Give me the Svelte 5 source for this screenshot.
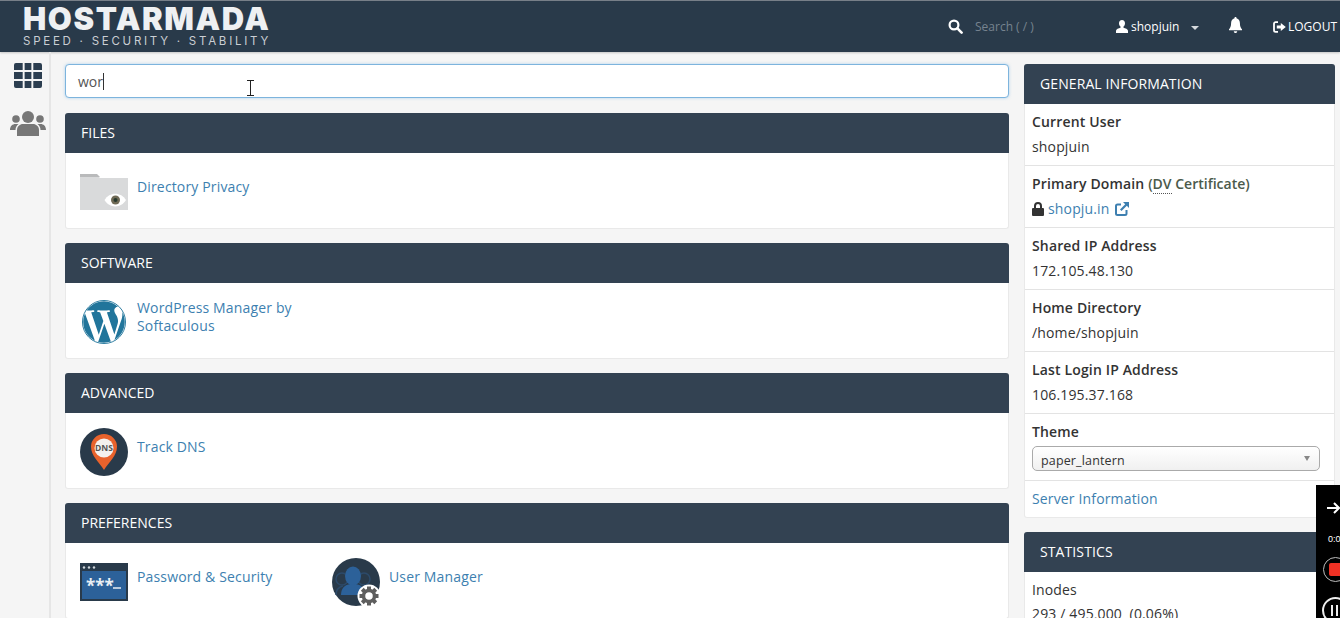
<script lang="ts">
	const groups = [
		{ title: 'FILES', items: [{ name: 'Directory Privacy', icon: 'folder' }] },
		{ title: 'SOFTWARE', items: [{ name: 'WordPress Manager by Softaculous', icon: 'wp', tall: true }] },
		{ title: 'ADVANCED', items: [{ name: 'Track DNS', icon: 'dns' }] },
		{
			title: 'PREFERENCES',
			items: [
				{ name: 'Password & Security', icon: 'pass' },
				{ name: 'User Manager', icon: 'user' }
			]
		}
	];
	const gearTeeth = [0, 45, 90, 135, 180, 225, 270, 315];
</script>

<div class="page">
	<header class="topbar">
		<div class="logo">
			<div class="logo-name">HOSTARMADA</div>
			<div class="logo-tag">SPEED · SECURITY · STABILITY</div>
		</div>
		<div class="top-search">
			<svg class="top-icon" width="15" height="15" viewBox="0 0 15 15">
				<circle cx="6" cy="6" r="4.4" fill="none" stroke="#fff" stroke-width="2.2" />
				<path d="M9.4 9.4 13.6 13.6" stroke="#fff" stroke-width="2.6" stroke-linecap="round" />
			</svg>
			<span class="search-hint">Search ( / )</span>
		</div>
		<div class="top-user">
			<svg width="12" height="13" viewBox="0 0 12 13">
				<path d="M6 0c1.9 0 3 1.400 3 3.300 0 1.400-.6 2.600-1.500 3.300v1.100c1.800.6 4.500 1.300 4.500 3v2.300H0v-2.300c0-1.700 2.700-2.400 4.500-3V6.600C3.600 5.900 3 4.700 3 3.300 3 1.400 4.100 0 6 0z" fill="#fff" />
			</svg>
			<span>shopjuin</span>
			<i class="caret"></i>
		</div>
		<svg class="bell" width="15" height="16" viewBox="0 0 15 15" preserveAspectRatio="none">
			<path d="M7.500 0c.7 0 1.100.5 1 1.200 2.200.5 3.400 2.300 3.400 4.500 0 3 .8 4.600 2.100 5.800v1H1v-1c1.300-1.200 2.100-2.800 2.100-5.800 0-2.200 1.200-4 3.400-4.500-.1-.7.3-1.200 1-1.200zM5.800 13.300h3.400c0 1-.8 1.700-1.700 1.700s-1.700-.7-1.700-1.700z" fill="#fff" />
		</svg>
		<div class="top-logout">
			<svg width="13" height="12" viewBox="0 0 13 12">
				<path d="M5 1.200H2.600C1.700 1.200 1 1.900 1 2.800v6.400c0 .9.700 1.600 1.600 1.600H5" fill="none" stroke="#fff" stroke-width="1.800" />
				<path d="M3.800 4.500h4V2l5 4-5 4V7.500h-4z" fill="#fff" />
			</svg>
			<span>LOGOUT</span>
		</div>
	</header>

	<div class="main">
		<aside class="rail">
			<svg class="rail-grid" width="28" height="25" viewBox="0 0 29 25" preserveAspectRatio="none">
				<path d="M2 0h7v7H0V2a2 2 0 0 1 2-2zM11 0h7v7h-7zM20 0h7a2 2 0 0 1 2 2v5h-9zM0 9h9v7H0zM11 9h7v7h-7zM20 9h9v7h-9zM0 18h9v7H2a2 2 0 0 1-2-2zM11 18h7v7h-7zM20 18h9v5a2 2 0 0 1-2 2h-7z" fill="#2c3e50" />
			</svg>
			<svg class="rail-users" width="36" height="26" viewBox="0 0 36 26">
				<g fill="#777">
					<circle cx="18" cy="6" r="6" />
					<circle cx="6" cy="8" r="3.800" />
					<circle cx="30" cy="8" r="3.800" />
					<path d="M7 25v-6c0-3.500 3-6 6-6h10c3 0 6 2.500 6 6v6z" />
					<path d="M0 19c0-4 2.500-6 5.500-6h3C6.500 14.500 5.500 16.500 5.500 19H0zM36 19c0-4-2.500-6-5.500-6h-3c2 1.500 3 3.500 3 6H36z" />
				</g>
			</svg>
		</aside>

		<section class="content">
			<div class="filter">
				<span>wor</span><i class="text-caret"></i>
				<svg class="ibeam" width="7" height="16" viewBox="0 0 7 16">
					<path d="M0 .5h7M0 15.500h7M3.500.5v15" stroke="#222" stroke-width="1" fill="none" />
				</svg>
			</div>

			{#each groups as group}
				<div class="panel">
					<h2 class="panel-head">{group.title}</h2>
					<div class="panel-body">
						{#each group.items as item}
							<div class="item">
								<div class="item-icon">
									{#if item.icon === 'folder'}
										<svg width="48" height="36" viewBox="0 0 48 36">
											<path d="M0 1h17l3 3h28v32H0z" fill="#d9dadb" />
											<path d="M0 0h17l3 3H0z" fill="#b9babb" />
											<path d="M24.500 26c5-8.500 16.500-8.500 21.500 0-5 8.500-16.500 8.500-21.500 0z" fill="#fff" />
											<circle cx="35.500" cy="26" r="4.500" fill="#6f6a55" />
											<circle cx="35.500" cy="26" r="2" fill="#26382c" />
										</svg>
									{:else if item.icon === 'wp'}
										<svg width="44" height="44" viewBox="0 0 24 24">
											<circle cx="12" cy="12" r="11.750" fill="#fff" stroke="#21759b" stroke-width="0.5" />
											<path transform="translate(12 12) scale(1.05) translate(-12 -12)" d="M21.469 6.825c.84 1.537 1.318 3.3 1.318 5.175 0 3.979-2.156 7.456-5.363 9.325l3.295-9.527c.615-1.54.82-2.771.82-3.864 0-.405-.026-.78-.07-1.11m-7.981.105c.647-.03 1.232-.105 1.232-.105.582-.075.514-.93-.067-.899 0 0-1.755.135-2.88.135-1.064 0-2.85-.15-2.85-.15-.585-.03-.661.855-.075.885 0 0 .54.061 1.125.09l1.68 4.605-2.37 7.08L5.354 6.9c.649-.03 1.234-.1 1.234-.1.585-.075.516-.93-.065-.896 0 0-1.746.138-2.874.138-.2 0-.438-.008-.69-.015C4.911 3.15 8.235 1.215 12 1.215c2.809 0 5.365 1.072 7.286 2.833-.046-.003-.091-.009-.141-.009-1.06 0-1.812.923-1.812 1.914 0 .89.513 1.643 1.06 2.531.411.72.89 1.643.89 2.977 0 .915-.354 1.994-.821 3.479l-1.075 3.585-3.9-11.61.001.014zM12 22.784c-1.059 0-2.081-.153-3.048-.437l3.237-9.406 3.315 9.087c.024.053.05.101.078.149-1.12.393-2.325.609-3.582.609M1.211 12c0-1.564.336-3.05.935-4.39L7.29 21.709C3.694 19.96 1.212 16.271 1.211 12" fill="#21759b" />
										</svg>
									{:else if item.icon === 'dns'}
										<svg width="48" height="48" viewBox="0 0 48 48">
											<circle cx="24" cy="24" r="24" fill="#293a4a" />
											<path d="M24 42C19 34 11 28 11 18.500a13 12.500 0 0 1 26 0C37 28 29 34 24 42z" fill="#e8622c" />
											<circle cx="24" cy="20" r="9.500" fill="#f4f1ee" />
											<text x="24" y="23" class="dns-text">DNS</text>
										</svg>
									{:else if item.icon === 'pass'}
										<svg width="48" height="38" viewBox="0 0 48 38">
											<rect width="48" height="38" fill="#293a4a" />
											<rect x="2" y="8" width="44" height="28" fill="#2c6199" />
											<circle cx="4" cy="4.500" r="1.200" fill="#cfd6dc" />
											<circle cx="9" cy="4.500" r="1.200" fill="#cfd6dc" />
											<circle cx="14" cy="4.500" r="1.200" fill="#cfd6dc" />
											<text x="6" y="29" class="pass-text">***</text>
											<path d="M33 25h8" stroke="#e8eef4" stroke-width="1.500" />
										</svg>
									{:else}
										<svg class="user-svg" width="48" height="48" viewBox="0 0 48 48">
											<circle cx="24" cy="24" r="24" fill="#293a4a" />
											<circle cx="10" cy="21" r="6" fill="none" stroke="#2c4a6a" stroke-width="1.500" />
											<circle cx="32" cy="21" r="6" fill="none" stroke="#2c4a6a" stroke-width="1.500" />
											<path d="M4 37c0-6 3-8 7-9M38 37c0-6-3-8-7-9" fill="none" stroke="#2c4a6a" stroke-width="1.500" />
											<ellipse cx="21" cy="18" rx="8" ry="9.500" fill="#2c6199" />
											<path d="M9 37c0-8 5-11 12-11s12 3 12 11z" fill="#2c6199" />
											<circle cx="37" cy="38" r="11.500" fill="#fff" />
											<g fill="#5e5e5e">
												{#each gearTeeth as a}
													<rect x="35" y="28.500" width="4" height="5" transform="rotate({a} 37 38)" />
												{/each}
											</g>
											<circle cx="37" cy="38" r="5.500" fill="none" stroke="#5e5e5e" stroke-width="3.500" />
										</svg>
									{/if}
								</div>
								<a class="item-link" class:tall={item.tall} href="#top">{item.name}</a>
							</div>
						{/each}
					</div>
				</div>
			{/each}
		</section>

		<aside class="side">
			<div class="panel side-panel">
				<h2 class="panel-head">GENERAL INFORMATION</h2>
				<div class="side-body">
					<div class="row">
						<div class="label">Current User</div>
						<div class="value">shopjuin</div>
					</div>
					<div class="row">
						<div class="label">Primary Domain <span class="note">(<abbr>DV</abbr> Certificate)</span></div>
						<div class="value">
							<svg class="lock" width="12" height="14" viewBox="0 0 12 14">
								<path d="M2 6V4a4 4 0 0 1 8 0v2h1a1 1 0 0 1 1 1v6a1 1 0 0 1-1 1H1a1 1 0 0 1-1-1V7a1 1 0 0 1 1-1zM4 6h4V4a2 2 0 0 0-4 0z" fill="#333" />
							</svg>
							<a href="#top">shopju.in</a>
							<svg class="ext" width="14" height="14" viewBox="0 0 14 14">
								<path d="M6 2.500H2.500A1.500 1.500 0 0 0 1 4v7.500A1.500 1.500 0 0 0 2.500 13H10a1.500 1.500 0 0 0 1.500-1.500V8" fill="none" stroke="#3d7fb0" stroke-width="2" />
								<path d="M8 0h6v6l-2.200-2.200L6.500 9 5 7.500l5.200-5.300z" fill="#3d7fb0" />
							</svg>
						</div>
					</div>
					<div class="row">
						<div class="label">Shared IP Address</div>
						<div class="value">172.105.48.130</div>
					</div>
					<div class="row">
						<div class="label">Home Directory</div>
						<div class="value">/home/shopjuin</div>
					</div>
					<div class="row">
						<div class="label">Last Login IP Address</div>
						<div class="value">106.195.37.168</div>
					</div>
					<div class="row theme-row">
						<div class="label">Theme</div>
						<div class="theme-select">paper_lantern<i class="select-arrow"></i></div>
					</div>
					<div class="row server-row"><a href="#top">Server Information</a></div>
				</div>
			</div>

			<div class="panel side-panel">
				<h2 class="panel-head">STATISTICS</h2>
				<div class="side-body">
					<div class="row">
						<div class="stat-label">Inodes</div>
						<div class="value">293 / 495,000 &nbsp;(0.06%)</div>
					</div>
				</div>
			</div>
		</aside>
	</div>

	<div class="recorder">
		<svg class="rec-arrow" width="14" height="12" viewBox="0 0 14 12">
			<path d="M0 6h12M7 1l5 5-5 5" fill="none" stroke="#fff" stroke-width="2" />
		</svg>
		<span class="rec-time">0:00</span>
		<div class="rec-ring"><i class="rec-stop"></i></div>
		<div class="rec-pause"><i></i><i></i></div>
	</div>
</div>

<style>
	:global(body) {
		margin: 0;
		background: #f4f4f4;
		font-family: 'Open Sans', sans-serif;
	}

	.page {
		position: relative;
		width: 1340px;
		height: 618px;
		overflow: hidden;
		background: #f5f5f5;
		color: #333;
		font-size: 14px;
	}

	.topbar {
		height: 51px;
		border-top: 1px solid #777f88;
		background: #293a4a;
		display: flex;
		align-items: center;
		color: #fff;
		box-shadow: 0 1px 2px rgba(0, 0, 0, 0.2);
	}

	.logo {
		margin-left: 23px;
		width: 250px;
		margin-top: -1px;
	}

	.logo-name {
		font-family: Inter, sans-serif;
		font-weight: 900;
		font-size: 31px;
		line-height: 30px;
		letter-spacing: 1.600px;
		color: #eef0f2;
		white-space: nowrap;
	}

	.logo-tag {
		font-family: Inter, sans-serif;
		font-size: 11.500px;
		line-height: 14px;
		letter-spacing: 2.750px;
		color: #c9ced3;
		white-space: nowrap;
	}

	.top-search {
		margin-left: 675px;
		width: 168px;
		display: flex;
		align-items: center;
		gap: 12px;
	}

	.search-hint {
		font-size: 12px;
		color: #76838f;
	}

	.top-user {
		width: 112px;
		display: flex;
		align-items: center;
		gap: 3px;
		font-size: 12px;
	}

	.caret {
		margin-left: 9px;
		margin-top: 2px;
		border: 4px solid transparent;
		border-top-color: #d5d9dd;
		border-bottom: 0;
	}

	.bell {
		margin-right: 30px;
		margin-bottom: 3px;
	}

	.top-logout {
		display: flex;
		align-items: center;
		gap: 2px;
		font-size: 12px;
		white-space: nowrap;
	}

	.main {
		display: flex;
		align-items: flex-start;
	}

	.rail {
		box-sizing: border-box;
		width: 51px;
		height: 566px;
		flex: none;
		border-right: 2px solid #e6e6e6;
		display: flex;
		flex-direction: column;
		align-items: center;
		padding: 11px 0 0 7px;
	}

	.rail-users {
		margin-top: 23px;
	}

	.content {
		width: 944px;
		margin-left: 14px;
		padding-top: 12px;
		flex: none;
	}

	.filter {
		position: relative;
		box-sizing: border-box;
		height: 34px;
		margin-bottom: 15px;
		padding-left: 12px;
		background: #fff;
		border: 1px solid #7db4dd;
		border-radius: 4px;
		box-shadow: 0 0 3px rgba(102, 175, 233, 0.5);
		display: flex;
		align-items: center;
		color: #555;
	}

	.text-caret {
		width: 1px;
		height: 17px;
		background: #333;
	}

	.ibeam {
		position: absolute;
		left: 181px;
		top: 15px;
	}

	.panel {
		margin-bottom: 14px;
		background: #fff;
		border: 1px solid #e9e9e9;
		border-top: 0;
		border-radius: 3px;
	}

	.panel-head {
		margin: 0 -1px;
		height: 40px;
		padding-left: 16px;
		background: #334252;
		border-radius: 3px 3px 0 0;
		color: #fff;
		font-size: 14px;
		font-weight: 400;
		line-height: 40px;
	}

	.panel-body {
		height: 75px;
		display: flex;
		padding: 0 14px;
	}

	.item {
		width: 252px;
		display: flex;
		align-items: flex-start;
		padding-top: 15px;
	}

	.item-icon {
		width: 48px;
		height: 48px;
		flex: none;
		margin-right: 9px;
		display: flex;
		align-items: center;
		justify-content: center;
	}

	.item-icon svg {
		flex: none;
		overflow: visible;
		margin-top: -1px;
	}

	.item-icon .user-svg {
		margin-top: 0;
	}

	.item-link {
		width: 190px;
		margin-top: 10px;
		color: #3d7fb0;
		text-decoration: none;
		line-height: 18px;
		letter-spacing: 0.15px;
	}

	.item-link.tall {
		margin-top: 1px;
	}

	.dns-text {
		font-size: 8.500px;
		font-weight: 700;
		fill: #555;
		text-anchor: middle;
	}

	.pass-text {
		font-size: 17px;
		font-weight: 700;
		fill: #e8eef4;
	}

	.side {
		width: 311px;
		margin-left: 15px;
		padding-top: 12px;
		flex: none;
	}

	.side-panel .panel-head {
		letter-spacing: 0.1px;
	}

	.row {
		box-sizing: border-box;
		height: 62px;
		padding: 8px 7px 0;
		border-bottom: 1px solid #e3e3e3;
		line-height: 20px;
		letter-spacing: 0.15px;
	}

	.label {
		font-weight: 600;
		margin-bottom: 5px;
		white-space: nowrap;
	}

	.stat-label {
		margin-bottom: 4px;
	}

	.note {
		color: #4b5a4b;
		letter-spacing: 0;
	}

	abbr {
		border-bottom: 1px dotted #555;
	}

	.value {
		display: flex;
		align-items: center;
		gap: 4px;
		white-space: pre;
	}

	.value a,
	.server-row a {
		color: #3d7fb0;
		text-decoration: none;
	}

	.value .ext {
		margin-left: 1px;
	}

	.theme-row {
		height: 67px;
	}

	.theme-select {
		position: relative;
		box-sizing: border-box;
		width: 288px;
		height: 25px;
		margin-top: -1px;
		padding: 1px 0 0 8px;
		border: 1px solid #aaa;
		border-radius: 5px;
		background: linear-gradient(#fff, #f0f0f0);
		font-size: 12.500px;
		line-height: 25px;
	}

	.select-arrow {
		position: absolute;
		right: 9px;
		top: 9px;
		border: 3px solid transparent;
		border-top: 5px solid #888;
		border-bottom: 0;
	}

	.server-row {
		height: 36px;
		border-bottom: 0;
	}

	.recorder {
		position: absolute;
		left: 1316px;
		top: 485px;
		width: 24px;
		height: 133px;
		background: #000;
		overflow: hidden;
		color: #fff;
	}

	.rec-arrow {
		position: absolute;
		left: 11px;
		top: 17px;
	}

	.rec-time {
		position: absolute;
		left: 12px;
		top: 49px;
		font-family: 'Liberation Sans', Arial, sans-serif;
		font-size: 9px;
		white-space: nowrap;
	}

	.rec-ring {
		position: absolute;
		left: 7px;
		top: 72px;
		width: 23px;
		height: 23px;
		border: 1px solid #bbb;
		border-radius: 50%;
	}

	.rec-stop {
		position: absolute;
		left: 5px;
		top: 5px;
		width: 13px;
		height: 13px;
		border-radius: 2px;
		background: #ee3124;
	}

	.rec-pause {
		position: absolute;
		left: 6px;
		top: 112px;
		width: 23px;
		height: 23px;
		border: 2px solid #eee;
		border-radius: 50%;
	}

	.rec-pause i {
		position: absolute;
		top: 6px;
		width: 2px;
		height: 11px;
		background: #eee;
	}

	.rec-pause i:first-child {
		left: 7px;
	}

	.rec-pause i:last-child {
		left: 12px;
	}
</style>
